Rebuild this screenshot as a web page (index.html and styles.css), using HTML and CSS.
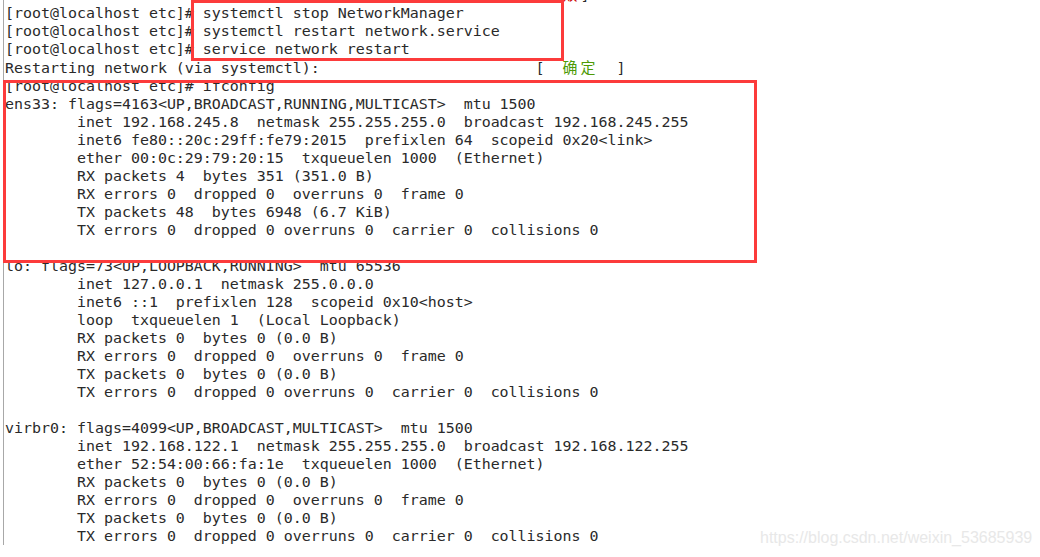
FILE: index.html
```html
<!DOCTYPE html>
<html>
<head>
<meta charset="utf-8">
<link rel="stylesheet" href="styles.css">
</head>
<body>
<div class="screen">
<pre class="term"><span class="pad">                                                           [</span><span class="cjk red">失败</span>]
[root@localhost etc]# systemctl stop NetworkManager
[root@localhost etc]# systemctl restart network.service
[root@localhost etc]# service network restart
Restarting network (via systemctl):                        [  <span class="cjk green">确定</span>  ]
[root@localhost etc]# ifconfig
ens33: flags=4163&lt;UP,BROADCAST,RUNNING,MULTICAST&gt;  mtu 1500
        inet 192.168.245.8  netmask 255.255.255.0  broadcast 192.168.245.255
        inet6 fe80::20c:29ff:fe79:2015  prefixlen 64  scopeid 0x20&lt;link&gt;
        ether 00:0c:29:79:20:15  txqueuelen 1000  (Ethernet)
        RX packets 4  bytes 351 (351.0 B)
        RX errors 0  dropped 0  overruns 0  frame 0
        TX packets 48  bytes 6948 (6.7 KiB)
        TX errors 0  dropped 0 overruns 0  carrier 0  collisions 0

lo: flags=73&lt;UP,LOOPBACK,RUNNING&gt;  mtu 65536
        inet 127.0.0.1  netmask 255.0.0.0
        inet6 ::1  prefixlen 128  scopeid 0x10&lt;host&gt;
        loop  txqueuelen 1  (Local Loopback)
        RX packets 0  bytes 0 (0.0 B)
        RX errors 0  dropped 0  overruns 0  frame 0
        TX packets 0  bytes 0 (0.0 B)
        TX errors 0  dropped 0 overruns 0  carrier 0  collisions 0

virbr0: flags=4099&lt;UP,BROADCAST,MULTICAST&gt;  mtu 1500
        inet 192.168.122.1  netmask 255.255.255.0  broadcast 192.168.122.255
        ether 52:54:00:66:fa:1e  txqueuelen 1000  (Ethernet)
        RX packets 0  bytes 0 (0.0 B)
        RX errors 0  dropped 0  overruns 0  frame 0
        TX packets 0  bytes 0 (0.0 B)
        TX errors 0  dropped 0 overruns 0  carrier 0  collisions 0</pre>
<div class="mark mark-cmd"></div>
<div class="mark mark-if"></div>
<div class="wm">https://blog.csdn.net/weixin_53685939</div>
</div>
</body>
</html>
```

FILE: styles.css
```css
html, body {
  margin: 0;
  padding: 0;
  background: #ffffff;
}

.screen {
  position: relative;
  width: 1040px;
  height: 557px;
  overflow: hidden;
  background: #ffffff;
}

.term {
  margin: -15px 0 0 3px;
  padding: 0 0 0 1px;
  border-left: 1px solid #a8a8a8;
  font-family: "DejaVu Sans Mono", "Liberation Mono", "Noto Sans CJK SC", monospace;
  font-size: 14.95px;
  line-height: 18px;
  color: #2a2a2a;
  white-space: pre;
}

.cjk {
  font-family: "Noto Sans CJK SC", sans-serif;
  letter-spacing: 3px;
}

.green {
  color: #4e9a06;
}

.red {
  color: #cc0000;
}

.mark {
  position: absolute;
  border: 3px solid #fc3b3b;
  box-sizing: border-box;
}

.mark-cmd {
  left: 191px;
  top: 0;
  width: 373px;
  height: 61px;
}

.mark-if {
  left: 3px;
  top: 80px;
  width: 754px;
  height: 183px;
}

.wm {
  position: absolute;
  left: 760px;
  top: 529px;
  font-family: "Liberation Sans", Arial, sans-serif;
  font-size: 16px;
  line-height: 18px;
  color: #e8e8e8;
}
```
